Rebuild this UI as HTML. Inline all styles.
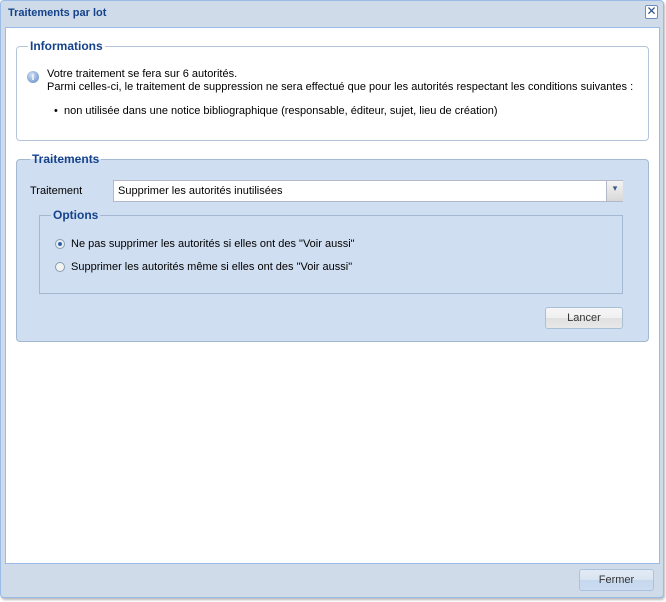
<!DOCTYPE html><html><head><style>
body{margin:0;width:666px;height:602px;background:#fff;font-family:"Liberation Sans",sans-serif;font-size:11px;color:#000;position:relative;overflow:hidden}
.a{position:absolute}
.win{left:0;top:0;width:664px;height:598px;background:#cfdbe8;border:1px solid #99bbe8;border-radius:4px;box-sizing:border-box;box-shadow:1px 2px 2px #bbb}
.fs{border:1px solid #b5c5d9;border-radius:4px;box-sizing:border-box}
.lg{font-weight:bold;color:#15428b;font-size:12px;background:#fff;padding:0 2px}
.btn{border:1px solid #a9bfd6;border-radius:3px;box-sizing:border-box;background:linear-gradient(#f6f6f6 0,#f0f0f0 50%,#e0e0e0 51%,#e8e8e8);text-align:center;color:#333;line-height:21px}
.rd{width:10px;height:10px;border:1px solid #8c9cb0;border-radius:50%;background:#f3f3f3;box-sizing:border-box}
</style></head><body>
<div class="a win"></div>
<div class="a" style="left:8px;top:7px;font-weight:bold;color:#15428b;font-size:11px">Traitements par lot</div>
<div class="a" style="left:645px;top:5px;width:13px;height:14px;border:1px solid #6c8fbf;border-radius:2px;background:#fff;box-sizing:border-box;font-size:12px;line-height:11px;text-align:center;color:#2a4f86">✕</div>
<div class="a" style="left:5px;top:27px;width:655px;height:537px;background:#fff;border:1px solid #99bbe8;box-sizing:border-box"></div>
<div class="a fs" style="left:16px;top:46px;width:633px;height:95px"></div>
<div class="a lg" style="left:28px;top:39px">Informations</div>
<div class="a" style="left:27px;top:71px;width:12px;height:12px;border-radius:50%;background:radial-gradient(circle at 40% 35%,#cfe0f6,#5d86c0);color:#fff;font-size:9px;font-weight:bold;text-align:center;line-height:12px">i</div>
<div class="a" style="left:47px;top:68px;line-height:13px">Votre traitement se fera sur 6 autorités.<br>Parmi celles-ci, le traitement de suppression ne sera effectué que pour les autorités respectant les conditions suivantes :</div>
<div class="a" style="left:54px;top:105px">•&nbsp;&nbsp;non utilisée dans une notice bibliographique (responsable, éditeur, sujet, lieu de création)</div>
<div class="a fs" style="left:16px;top:159px;width:633px;height:183px;background:#d0def1;border-color:#a5b8d2"></div>
<div class="a lg" style="left:30px;top:152px;background:linear-gradient(#fff 50%,#d0def1 50%)">Traitements</div>
<div class="a" style="left:30px;top:185px">Traitement</div>
<div class="a" style="left:113px;top:180px;width:510px;height:22px;border:1px solid #b5b8c8;background:#fff;box-sizing:border-box;padding:4px 4px">Supprimer les autorités inutilisées</div>
<div class="a" style="left:606px;top:181px;width:16px;height:20px;background:linear-gradient(#f4f4f4,#d8d8d8);border-left:1px solid #b5b8c8;color:#3a5a8c;font-size:9px;text-align:center;line-height:14px">▾</div>
<div class="a fs" style="left:39px;top:215px;width:584px;height:79px;border-radius:0;border-color:#a5b8d2"></div>
<div class="a lg" style="left:51px;top:208px;background:#d0def1">Options</div>
<div class="a rd" style="left:55px;top:239px;background:radial-gradient(circle,#2b5c9e 30%,#e8eef6 40%)"></div>
<div class="a" style="left:71px;top:238px">Ne pas supprimer les autorités si elles ont des "Voir aussi"</div>
<div class="a rd" style="left:55px;top:262px"></div>
<div class="a" style="left:71px;top:261px">Supprimer les autorités même si elles ont des "Voir aussi"</div>
<div class="a btn" style="left:545px;top:307px;width:78px;height:22px">Lancer</div>
<div class="a btn" style="left:579px;top:569px;width:75px;height:22px;border-color:#a9c2e2;background:linear-gradient(#e3ebf5 0,#d8e4f2 50%,#c6d8ee 51%,#cbdcf0)">Fermer</div>
</body></html>
